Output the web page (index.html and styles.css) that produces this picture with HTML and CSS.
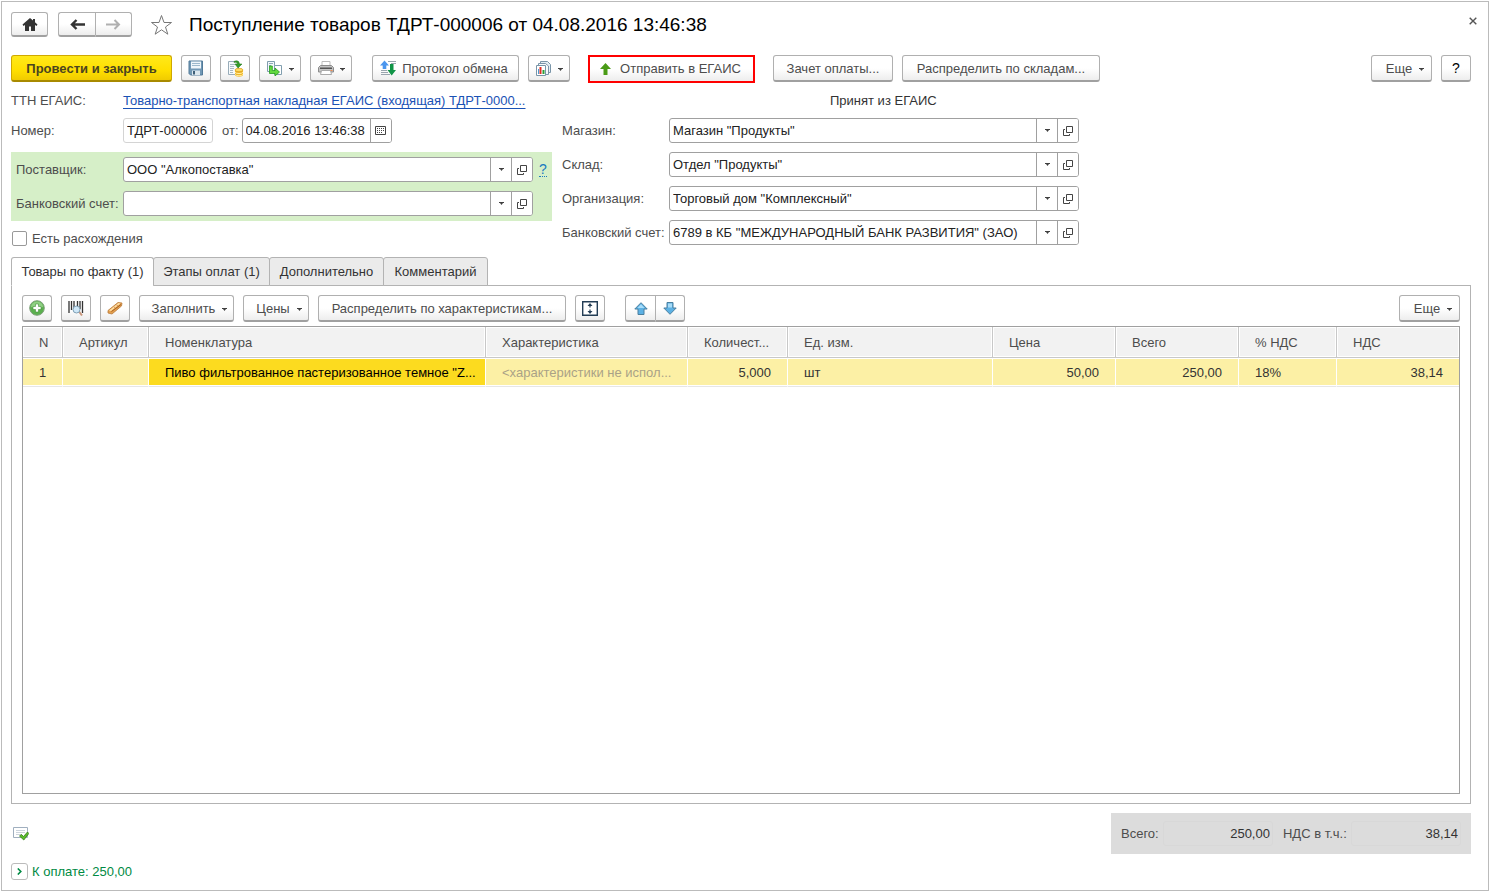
FILE: index.html
```html
<!DOCTYPE html>
<html lang="ru">
<head>
<meta charset="utf-8">
<title>Поступление товаров ТДРТ-000006</title>
<link rel="stylesheet" href="styles.css">
</head>
<body>
<svg class="sprite" width="0" height="0" aria-hidden="true">
  <symbol id="i-caret" viewBox="0 0 5 3"><path d="M0 0h5v1H4L2.500 3 1 1H0z" fill="#404040"/></symbol>
  <symbol id="i-open" viewBox="0 0 10 10"><path d="M3.500.5h6v6h-6zM2 3.500H.5v6h6V8" fill="none" stroke="#444" stroke-width="1"/></symbol>
</svg>
<main class="window">
  <header class="titlebar">
    <button class="btn nav-home" type="button" aria-label="Домой">
      <svg width="16" height="13" viewBox="0 0 16 13"><path d="M8 0 0.500 6.500 1.500 8 3 7v6h4V8.500h2V13h4V7l1.500 1 1-1.500-2.500-2.200V1h-2v1.500z" fill="#333"/></svg>
    </button>
    <div class="pair">
      <button class="btn nav-step" type="button" aria-label="Назад"><svg width="15" height="11" viewBox="0 0 15 11"><path d="M2 5.500h13M6.500 1 2 5.500 6.500 10" fill="none" stroke="#333" stroke-width="2.400"/></svg></button>
      <button class="btn nav-step" type="button" aria-label="Вперед"><svg width="15" height="11" viewBox="0 0 15 11"><path d="M0 5.500h13M8.500 1 13 5.500 8.500 10" fill="none" stroke="#b0b0b0" stroke-width="2"/></svg></button>
    </div>
    <button class="plain star" type="button" aria-label="Избранное"><svg width="23" height="22" viewBox="0 0 23 22"><path d="M11.500 1.500 14 8.500h7.500l-6 4.500 2.300 7.200-6.300-4.400-6.300 4.400L7.500 13l-6-4.500H9z" fill="#fff" stroke="#777" stroke-width="1"/></svg></button>
    <h1 class="title">Поступление товаров ТДРТ-000006 от 04.08.2016 13:46:38</h1>
    <button class="plain close" type="button" aria-label="Закрыть"><svg width="8" height="8" viewBox="0 0 8 8"><path d="M.7.7l6.600 6.600M7.300.7.7 7.300" stroke="#555" stroke-width="1.400"/></svg></button>
  </header>

  <div class="toolbar">
    <button class="btn primary" type="button">Провести и закрыть</button>
    <button class="btn square" type="button" aria-label="Записать">
      <svg width="16" height="16" viewBox="0 0 16 16"><path d="M1 1h13.500v14H2.500L1 13.500z" fill="#7198b5" stroke="#527a99"/><path d="M3 1.500h10v7H3z" fill="#eef5fa"/><path d="M4 3.500h8M4 5.500h8" stroke="#9cb8cc"/><path d="M4 10.500h8v4.500H4z" fill="#dce7ee"/><path d="M5 11h2v3.500H5z" fill="#3e5f78"/></svg>
    </button>
    <button class="btn square" type="button" aria-label="Провести">
      <svg width="17" height="17" viewBox="0 0 17 17"><path d="M1.500 1.500h10v13h-10z" fill="#f7fafb" stroke="#98acb9"/><path d="M3 4.500h5M3 6.500h4M3 8.500h4M3 10.500h3M3 12.500h3" stroke="#a9b9c3"/><path d="M7 1.500c3-1.500 5-.5 5.500 2.500H15l-4 4-3-4h2.500C10 2.500 9 2 7 2.500z" fill="#329b28" stroke="#23751b" stroke-width=".5"/><path d="M8 10v5c0 2.300 8 2.300 8 0v-5z" fill="#f0b429"/><path d="M8 12.300c1 1.700 7 1.700 8 0M8 14.500c1 1.700 7 1.700 8 0" fill="none" stroke="#fff0a0"/><ellipse cx="12" cy="10" rx="4" ry="1.700" fill="#ffdc63" stroke="#d99d1c" stroke-width=".7"/></svg>
    </button>
    <button class="btn drop" type="button" aria-label="Создать на основании">
      <svg width="17" height="15" viewBox="0 0 17 15"><path d="M1.500.5h7v10h-7z" fill="#f3f8fb" stroke="#819eaf"/><path d="M3 2.500h4M3 4.500h2" stroke="#91a9b7"/><path d="M8.500 4.500h7v9h-7z" fill="#fff" stroke="#819eaf"/><path d="M3.500 5h2.800v4.500H9V7l4.500 4L9 15v-2.500H3.500z" fill="#62d83e" stroke="#259b20" stroke-width=".8"/></svg>
      <svg class="caret"><use href="#i-caret"/></svg>
    </button>
    <button class="btn drop" type="button" aria-label="Печать">
      <svg width="16" height="14" viewBox="0 0 16 14"><path d="M4 .5h8v5H4z" fill="#fff" stroke="#bbb"/><path d="M2.500 4.500h11l2 2v4.500H.5V6.500z" fill="#c4c4c4" stroke="#8c8c8c"/><path d="M2 6.500h12V8H2z" fill="#555"/><path d="M3.500 9.500h9l1 4h-11z" fill="#fff" stroke="#aaa"/><path d="M12.500 9.500h2" stroke="#ef8b50"/></svg>
      <svg class="caret"><use href="#i-caret"/></svg>
    </button>
    <button class="btn protocol" type="button">
      <svg width="17" height="16" viewBox="0 0 17 16"><path d="M8 1.500h8M11 3.500h5M11 5.500h1M1 10.500h6M1 12.500h7M1 14.500h9" stroke="#9aa5ae"/><path d="M4.500.5 9 5.500H6.300V9H2.700V5.500H0z" fill="#4b96ee"/><path d="M10 4h3.500v6H16l-4.300 5.500L7.500 10H10z" fill="#119447"/></svg>
      <span>Протокол обмена</span>
    </button>
    <button class="btn drop" type="button" aria-label="Отчеты">
      <svg width="17" height="17" viewBox="0 0 17 17"><path d="M5.500 1.500h7l3 3v8h-10z" fill="#e4edf3" stroke="#7994a8"/><path d="M3.500 3.500h7l3 2.500v8.500h-10z" fill="#f5f9fb" stroke="#7994a8"/><path d="M1.500 5.500h9v10h-9z" fill="#fff" stroke="#7994a8"/><path d="M3.500 9v5" stroke="#4b9bd0"/><path d="M5.500 7v7" stroke="#e02c25" stroke-width="2"/><path d="M8.500 10v4" stroke="#2c9e36" stroke-width="2"/></svg>
      <svg class="caret"><use href="#i-caret"/></svg>
    </button>
    <button class="btn send" type="button">
      <svg width="11" height="12" viewBox="0 0 11 12"><path d="M5.500 0 11 6H7.500v6h-4V6H0z" fill="#4a9b16"/></svg>
      <span>Отправить в ЕГАИС</span>
    </button>
    <button class="btn offset" type="button">Зачет оплаты...</button>
    <button class="btn stores" type="button">Распределить по складам...</button>
    <button class="btn more push" type="button">Еще <svg class="caret"><use href="#i-caret"/></svg></button>
    <button class="btn square help" type="button">?</button>
  </div>

  <div class="link-row">
    <span class="caption">ТТН ЕГАИС:</span>
    <span><a class="doc-link" href="#">Товарно-транспортная накладная ЕГАИС (входящая) ТДРТ-0000...</a></span>
    <span class="status">Принят из ЕГАИС</span>
  </div>

  <div class="form">
    <div class="column">
      <div class="row number-row">
        <label for="num">Номер:</label>
        <div class="field locked number"><input id="num" value="ТДРТ-000006" readonly></div>
        <label class="from" for="date">от:</label>
        <div class="field date"><input id="date" value="04.08.2016 13:46:38"><button type="button" aria-label="Календарь"><svg width="11" height="9" viewBox="0 0 11 9"><path d="M.5.5h10v8H.5z" fill="none" stroke="#444"/><path d="M2 2.500h7M2 4.500h7M2 6.500h6" stroke="#444" stroke-dasharray="1 1"/></svg></button></div>
      </div>
      <div class="supplier">
        <div class="row">
          <label for="sup">Поставщик:</label>
          <div class="field"><input id="sup" value='ООО "Алкопоставка"'><button type="button" aria-label="Выбрать"><svg class="caret"><use href="#i-caret"/></svg></button><button type="button" aria-label="Открыть"><svg class="open"><use href="#i-open"/></svg></button></div>
          <a class="hint" href="#">?</a>
        </div>
        <div class="row">
          <label for="acc1">Банковский счет:</label>
          <div class="field"><input id="acc1" value=""><button type="button" aria-label="Выбрать"><svg class="caret"><use href="#i-caret"/></svg></button><button type="button" aria-label="Открыть"><svg class="open"><use href="#i-open"/></svg></button></div>
        </div>
      </div>
      <label class="check"><input type="checkbox">Есть расхождения</label>
    </div>
    <div class="column">
      <div class="row">
        <label for="shop">Магазин:</label>
        <div class="field"><input id="shop" value='Магазин "Продукты"'><button type="button" aria-label="Выбрать"><svg class="caret"><use href="#i-caret"/></svg></button><button type="button" aria-label="Открыть"><svg class="open"><use href="#i-open"/></svg></button></div>
      </div>
      <div class="row">
        <label for="store">Склад:</label>
        <div class="field"><input id="store" value='Отдел "Продукты"'><button type="button" aria-label="Выбрать"><svg class="caret"><use href="#i-caret"/></svg></button><button type="button" aria-label="Открыть"><svg class="open"><use href="#i-open"/></svg></button></div>
      </div>
      <div class="row">
        <label for="org">Организация:</label>
        <div class="field"><input id="org" value='Торговый дом "Комплексный"'><button type="button" aria-label="Выбрать"><svg class="caret"><use href="#i-caret"/></svg></button><button type="button" aria-label="Открыть"><svg class="open"><use href="#i-open"/></svg></button></div>
      </div>
      <div class="row">
        <label for="acc2">Банковский счет:</label>
        <div class="field"><input id="acc2" value='6789 в КБ "МЕЖДУНАРОДНЫЙ БАНК РАЗВИТИЯ" (ЗАО)'><button type="button" aria-label="Выбрать"><svg class="caret"><use href="#i-caret"/></svg></button><button type="button" aria-label="Открыть"><svg class="open"><use href="#i-open"/></svg></button></div>
      </div>
    </div>
  </div>

  <div class="tabs" role="tablist">
    <button class="tab goods-tab active" type="button" role="tab" aria-selected="true">Товары по факту (1)</button>
    <button class="tab stages-tab" type="button" role="tab">Этапы оплат (1)</button>
    <button class="tab extra-tab" type="button" role="tab">Дополнительно</button>
    <button class="tab comment-tab" type="button" role="tab">Комментарий</button>
  </div>

  <section class="panel">
    <div class="toolbar">
      <button class="btn square" type="button" aria-label="Добавить">
        <svg width="16" height="16" viewBox="0 0 16 16"><circle cx="8" cy="8" r="7.300" fill="#5bb04e" stroke="#7f9f7b"/><path d="M2 7a6 5.500 0 0 1 12 0q-6 2-12 0z" fill="#8fd083"/><path d="M6.500 4h3v2.500H12v3H9.500V12h-3V9.500H4v-3h2.500z" fill="#fff" stroke="#448f3a" stroke-width=".6"/></svg>
      </button>
      <button class="btn square" type="button" aria-label="Поиск по штрихкоду">
        <svg width="16" height="17" viewBox="0 0 16 17"><path d="M1 1v12M3.500 1v9M6 1v9M9.500 1v6M12 1v8M14.500 1v12" stroke="#333" stroke-width="1.300"/><path d="M11 11.500l3 4" stroke="#c9967b" stroke-width="2"/><circle cx="8.500" cy="9.500" r="3.500" fill="#cfe8f8" stroke="#7f9fb5"/></svg>
      </button>
      <button class="btn square" type="button" aria-label="Терминал сбора данных">
        <svg width="16" height="14" viewBox="0 0 16 14"><path d="M1 9.500 11 1.500l4 .5-.5 3L5 13l-4-1z" fill="#e3a04f" stroke="#b97a3a" stroke-width=".8"/><path d="M2 9.500 11.500 2l2 .5L4 10z" fill="#ffe0a6"/><path d="M4.500 10.500 14 3.500" stroke="#a85e1e"/><path d="M7 6l1.500 1M9.500 4l1.500 1" stroke="#c98a48" stroke-width=".8"/></svg>
      </button>
      <button class="btn fill" type="button">Заполнить <svg class="caret"><use href="#i-caret"/></svg></button>
      <button class="btn prices" type="button">Цены <svg class="caret"><use href="#i-caret"/></svg></button>
      <button class="btn features" type="button">Распределить по характеристикам...</button>
      <button class="btn square" type="button" aria-label="Развернуть">
        <svg width="16" height="15" viewBox="0 0 16 15"><path d="M.7.700h14.600v13.600H.7z" fill="#fff" stroke="#233d55" stroke-width="1.400"/><path d="M8 2 10.500 5H8.600v1.500H7.400V5H5.500zM8 13 10.500 10H8.600V8.500H7.400V10H5.500z" fill="#233d55"/></svg>
      </button>
      <div class="pair arrows">
        <button class="btn square" type="button" aria-label="Вверх"><svg width="14" height="13" viewBox="0 0 14 13"><path d="M7 .7 13.200 7H10v5.500H4V7H.8z" fill="#5cb1e4" stroke="#4a7f9f"/><path d="M7 2.200 10.500 6h-7z" fill="#a8dcf8"/></svg></button>
        <button class="btn square" type="button" aria-label="Вниз"><svg width="14" height="13" viewBox="0 0 14 13"><path d="M7 12.300 13.200 6H10V.5H4V6H.8z" fill="#5cb1e4" stroke="#4a7f9f"/><path d="M5 1.500h4v4H5z" fill="#a8dcf8"/></svg></button>
      </div>
      <button class="btn more push" type="button">Еще <svg class="caret"><use href="#i-caret"/></svg></button>
    </div>
    <div class="grid">
      <table class="goods">
        <colgroup><col class="w-n"><col class="w-art"><col class="w-name"><col class="w-char"><col class="w-qty"><col class="w-unit"><col class="w-sum"><col class="w-sum"><col class="w-vat"><col class="w-tax"></colgroup>
        <thead><tr><th>N</th><th>Артикул</th><th>Номенклатура</th><th>Характеристика</th><th>Количест...</th><th>Ед. изм.</th><th>Цена</th><th>Всего</th><th>% НДС</th><th>НДС</th></tr></thead>
        <tbody><tr><td>1</td><td></td><td class="current">Пиво фильтрованное пастеризованное темное "Z...</td><td class="muted">&lt;характеристики не испол...</td><td class="num">5,000</td><td>шт</td><td class="num">50,00</td><td class="num">250,00</td><td>18%</td><td class="num">38,14</td></tr></tbody>
      </table>
    </div>
  </section>

  <footer class="summary">
    <svg width="16" height="14" viewBox="0 0 16 14"><path d="M.5.5h14v10H.5z" fill="#fff" stroke="#a0afbf"/><path d="M3 3.500h9M3 5.500h9M3 7.500h6" stroke="#ccd4dc"/><path d="M6.500 9 8.500 7.500l2 2 4-4.500 1.300 1.500-5 6.500z" fill="#5bbd2b" stroke="#347d19" stroke-width=".8"/></svg>
    <div class="totals">
      <label for="total">Всего:</label><input id="total" value="250,00" readonly>
      <label for="vat">НДС в т.ч.:</label><input id="vat" value="38,14" readonly>
    </div>
  </footer>
  <div class="payment">
    <button class="expand" type="button" aria-label="Развернуть"><svg width="5" height="7" viewBox="0 0 5 7"><path d="M.8.5l3 3-3 3" fill="none" stroke="#008a43" stroke-width="1.600"/></svg></button>
    <span>К оплате: 250,00</span>
  </div>
</main>
</body>
</html>
```
FILE: styles.css
```css
* { box-sizing: border-box; }

body {
  margin: 0;
  padding: 1px 0 0 1px;
  background: #fff;
  color: #4d4d4d;
  font: 13px/15px "Liberation Sans", Arial, sans-serif;
}

button, input { font: inherit; color: inherit; }
button { margin: 0; padding: 0; }
svg { display: block; flex: none; }
.sprite { position: absolute; }

.window {
  display: flex;
  flex-direction: column;
  min-height: calc(100vh - 1px);
  padding: 10px 17px 10px 9px;
  border: 1px solid #bbb;
}

.caret { width: 5px; height: 3px; }
.open { width: 10px; height: 10px; }

/* Buttons */
.btn {
  display: flex;
  flex: none;
  align-items: center;
  justify-content: center;
  height: 27px;
  border: 1px solid #b0b0b0;
  border-bottom: 2px solid #a0a0a0;
  border-radius: 3px;
  background: linear-gradient(#fff 50%, #ededed);
  white-space: nowrap;
}
.btn .caret { margin-top: 2px; }
.plain { border: 0; background: none; }
.square { width: 30px; }
.drop { width: 42px; gap: 6px; }
.more { width: 61px; gap: 7px; padding-left: 7px; }
.push { margin-left: auto; }
.help { color: #000; font-size: 14px; }
.primary {
  width: 161px;
  border-color: #cfa800 #cfa800 #a88a00;
  background: linear-gradient(#ffe91a, #ffdf00 60%, #f0cb00);
  color: #4a4420;
  font-weight: bold;
}
.protocol { width: 147px; gap: 5px; margin-left: 11px; padding-right: 3px; }
.send {
  width: 167px;
  height: 28px;
  gap: 9px;
  margin-left: 9px;
  padding-right: 2px;
  border: 2px solid #f00;
  border-radius: 0;
}
.offset { width: 120px; margin-left: 9px; }
.stores { width: 198px; }
.fill { width: 95px; gap: 7px; padding-left: 6px; }
.prices { width: 66px; gap: 7px; padding-left: 6px; }
.features { width: 248px; }
.arrows { margin-left: 11px; }

.pair { display: flex; }
.pair .btn:first-child { border-radius: 3px 0 0 3px; border-right: 0; }
.pair .btn:last-child { border-radius: 0 3px 3px 0; }

/* Title */
.titlebar { display: flex; align-items: center; height: 25px; }
.titlebar .btn { height: 25px; }
.nav-home { width: 37px; margin-right: 10px; }
.nav-step { width: 37px; }
.star { margin: 0 16px 0 18px; }
.title { margin: 0; color: #000; font-size: 19px; font-weight: normal; line-height: 24px; white-space: nowrap; }
.close { align-self: flex-start; margin: 5px -6px 0 auto; }

.toolbar { display: flex; align-items: center; gap: 9px; height: 27px; }
.titlebar + .toolbar { margin-top: 18px; }

/* Document link */
.link-row {
  display: grid;
  grid-template-columns: 112px 707px 1fr;
  align-items: center;
  height: 18px;
  margin: 9px 0;
}
.doc-link { color: #1a52b5; text-decoration: underline; text-underline-offset: 3px; text-decoration-skip-ink: none; }
.status { color: #333; }

/* Form */
.form { display: flex; gap: 10px; }
.column { display: flex; flex-direction: column; gap: 9px; }
.row { display: flex; align-items: center; height: 25px; }
.row > label:first-child { flex: none; width: 107px; white-space: nowrap; }
.number-row > label:first-child { width: 112px; }
.field {
  display: flex;
  width: 410px;
  height: 25px;
  overflow: hidden;
  border: 1px solid #a0a0a0;
  border-radius: 3px;
  background: #fff;
}
.field input {
  flex: 1;
  min-width: 0;
  padding: 0 3px;
  border: 0;
  outline: 0;
  background: none;
  color: #222;
}
.field button {
  display: grid;
  flex: none;
  place-items: center;
  width: 21px;
  border: 0;
  border-left: 1px solid #a0a0a0;
  background: #fff;
}
.number { width: 90px; }
.date { width: 150px; }
.locked { border-color: #d4d4d4; }
.from { margin: 0 3px 0 9px; }
.supplier {
  display: flex;
  flex-direction: column;
  gap: 9px;
  width: 541px;
  padding: 5px 0 5px 5px;
  background: #d6efc8;
}
.hint { margin-left: 6px; border-bottom: 1px dotted #1a7ac0; color: #1a7ac0; font-size: 14px; line-height: 14px; text-decoration: none; }
.check { display: flex; align-items: center; gap: 5px; height: 17px; }
.check input {
  width: 15px;
  height: 15px;
  margin: 0 0 0 1px;
  appearance: none;
  border: 1px solid #999;
  border-radius: 2px;
  background: #fff;
}

/* Tabs */
.tabs { display: flex; position: relative; margin: 10px 0 -1px; }
.tab {
  height: 29px;
  border: 1px solid #b3b3b3;
  border-radius: 3px 3px 0 0;
  background: #ebebeb;
  color: #333;
  white-space: nowrap;
}
.goods-tab { width: 143px; }
.stages-tab { width: 117px; }
.extra-tab { width: 115px; }
.comment-tab { width: 105px; }
.tab + .tab { margin-left: -1px; }
.tab.active { border-bottom-color: #fff; background: #fff; }

.panel {
  display: flex;
  flex: 1;
  flex-direction: column;
  gap: 4px;
  padding: 9px 10px;
  border: 1px solid #b3b3b3;
}
.grid { flex: 1; border: 1px solid #a0a0a0; }

.goods { width: 100%; table-layout: fixed; border-collapse: separate; border-spacing: 0; }
.w-n { width: 40px; }
.w-art { width: 86px; }
.w-name { width: 337px; }
.w-char { width: 202px; }
.w-qty { width: 100px; }
.w-unit { width: 205px; }
.w-sum { width: 123px; }
.w-vat { width: 98px; }
.w-tax { width: 122px; }
.goods th, .goods td {
  overflow: hidden;
  padding: 0 16px;
  font-weight: normal;
  text-align: left;
  white-space: nowrap;
}
.goods th {
  height: 31px;
  border-right: 1px solid #c8c8c8;
  border-bottom: 1px solid #c8c8c8;
  background: #f2f2f2;
  box-shadow: inset 0 0 0 1px #fff;
}
.goods th:last-child { border-right: 0; }
.goods td {
  height: 29px;
  border-right: 1px solid #fff;
  border-bottom: 1px solid #e6e6e6;
  background: #fcf0a5;
  box-shadow: inset 0 1px #fff, inset 0 -1px #fff;
  color: #333;
}
.goods td:last-child { border-right: 0; }
.goods .current { background: #fcdb1f; color: #000; }
.goods .muted { color: #aaa287; }
.goods .num { text-align: right; }

/* Totals */
.summary { display: flex; align-items: center; justify-content: space-between; margin-top: 9px; padding-left: 2px; }
.totals { display: flex; align-items: center; width: 360px; height: 41px; padding: 0 10px; background: #dcdcdc; }
.totals label { white-space: nowrap; }
.totals input {
  flex: 1;
  min-width: 0;
  height: 25px;
  margin-left: 4px;
  padding: 0 2px;
  border: 1px solid #d8d8d8;
  border-radius: 3px;
  outline: 0;
  background: none;
  color: #333;
  text-align: right;
}
.totals input + label { margin-left: 10px; }

.payment { display: flex; align-items: center; gap: 4px; margin-top: 9px; color: #008a43; }
.expand {
  display: grid;
  place-items: center;
  width: 17px;
  height: 17px;
  border: 1px solid #bbb;
  border-radius: 3px;
  background: #fff;
}
```
